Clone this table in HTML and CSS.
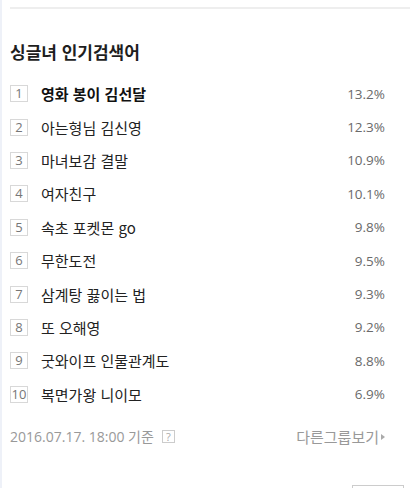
FILE: index.html
```html
<!DOCTYPE html>
<html lang="ko">
<head>
<meta charset="utf-8">
<link rel="stylesheet" href="styles.css">
</head>
<body>
<div class="page">
  <div class="panel">
    <div class="topline"></div>
    <h2 class="title">싱글녀 인기검색어</h2>
    <ol class="rank">
      <li class="row first"><span class="num">1</span><span class="kw">영화 봉이 김선달</span><span class="pct">13.2%</span></li>
      <li class="row"><span class="num">2</span><span class="kw">아는형님 김신영</span><span class="pct">12.3%</span></li>
      <li class="row"><span class="num">3</span><span class="kw">마녀보감 결말</span><span class="pct">10.9%</span></li>
      <li class="row"><span class="num">4</span><span class="kw">여자친구</span><span class="pct">10.1%</span></li>
      <li class="row"><span class="num">5</span><span class="kw">속초 포켓몬 go</span><span class="pct">9.8%</span></li>
      <li class="row"><span class="num">6</span><span class="kw">무한도전</span><span class="pct">9.5%</span></li>
      <li class="row"><span class="num">7</span><span class="kw">삼계탕 끓이는 법</span><span class="pct">9.3%</span></li>
      <li class="row"><span class="num">8</span><span class="kw">또 오해영</span><span class="pct">9.2%</span></li>
      <li class="row"><span class="num">9</span><span class="kw">굿와이프 인물관계도</span><span class="pct">8.8%</span></li>
      <li class="row"><span class="num">10</span><span class="kw">복면가왕 니이모</span><span class="pct">6.9%</span></li>
    </ol>
    <div class="foot">
      <span class="date">2016.07.17. 18:00 기준<span class="help">?</span></span>
      <span class="more">다른그룹보기<span class="arrow"></span></span>
    </div>
    <div class="btnrow"><span class="btn"></span></div>
  </div>
</div>
</body>
</html>
```
FILE: styles.css
```css
html, body {
  margin: 0;
  padding: 0;
  background: #fff;
  overflow: hidden;
}
.page {
  width: 410px;
  height: 488px;
  overflow: hidden;
  border-left: 2px solid #eef1f8;
  box-sizing: border-box;
  font-family: "Noto Sans CJK KR", "Open Sans", sans-serif;
  color: #222;
}
.panel {
  padding: 7px 0 0 8px;
}
.topline {
  height: 2px;
  background: #eeeeee;
}
.title {
  margin: 31px 0 0 0;
  font-size: 17px;
  line-height: 24px;
  font-weight: 700;
  color: #1e1e1e;
}
.rank {
  list-style: none;
  margin: 13px 0 0 0;
  padding: 0 25px 0 0;
}
.row {
  height: 33.4px;
  display: flex;
  align-items: center;
}
.num {
  width: 16px;
  height: 15px;
  border: 1px solid #d8d8d8;
  box-sizing: content-box;
  font-family: "Open Sans", sans-serif;
  font-size: 13px;
  line-height: 15px;
  color: #777;
  text-align: center;
  flex: none;
}
.kw {
  margin-left: 13px;
  font-size: 15px;
  color: #222;
  flex: 1;
}
.first .kw {
  font-weight: 700;
  color: #111;
}
.pct {
  font-family: "Open Sans", sans-serif;
  font-size: 13.5px;
  color: #6a6a6a;
}
.foot {
  margin-top: 16px;
  padding-right: 25px;
  display: flex;
  justify-content: space-between;
  align-items: center;
  line-height: 20px;
  font-size: 14px;
  color: #999;
}
.date {
  font-family: "Open Sans", "Noto Sans CJK KR", sans-serif;
  display: flex;
  align-items: center;
  gap: 8px;
}
.help {
  display: inline-block;
  width: 11px;
  height: 11px;
  border: 1px solid #ccc;
  font-size: 11px;
  line-height: 11px;
  text-align: center;
  color: #aaa;
}
.more {
  display: flex;
  align-items: center;
  font-size: 15px;
}
.arrow {
  width: 0;
  height: 0;
  margin-left: 2px;
  border-left: 4px solid #aaa;
  border-top: 3px solid transparent;
  border-bottom: 3px solid transparent;
}
.btnrow {
  margin-top: 38px;
  display: flex;
  justify-content: flex-end;
  padding-right: 6px;
}
.btn {
  width: 50px;
  height: 30px;
  border: 1px solid #ccc;
}
```
